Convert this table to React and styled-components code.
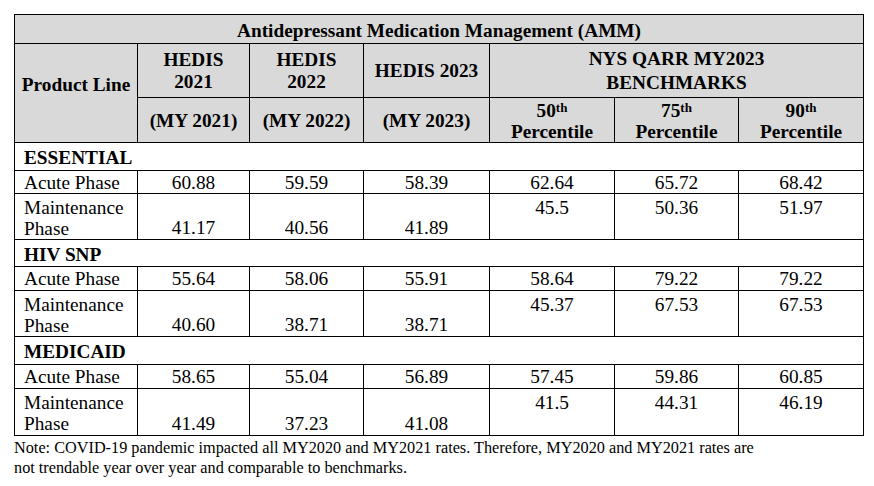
import React from "react";
import styled, { createGlobalStyle } from "styled-components";

const SERIF = `"Liberation Serif", "Times New Roman", Times, serif`;

const Global = createGlobalStyle`
  html, body { margin: 0; padding: 0; background: #ffffff; }
  body { font-family: ${SERIF}; color: #000; }
`;

const Page = styled.div`
  padding: 14px 0 0 14px;
`;

const Table = styled.table`
  border-collapse: collapse;
  table-layout: fixed;
  width: 850px;
  font-family: ${SERIF};
  font-size: 19.3px;
  line-height: 21px;
`;

const Row = styled.tr`
  height: ${(p) => p.$h}px;
`;

const HeadCell = styled.th`
  border: 1px solid #000;
  background: #d9d9d9;
  font-weight: bold;
  text-align: center;
  vertical-align: middle;
  padding: ${(p) => p.$pad || "0 6px"};
  line-height: ${(p) => p.$lh || 21}px;
  white-space: nowrap;
`;

const SectionCell = styled.td`
  border: 1px solid #000;
  font-weight: bold;
  text-align: left;
  vertical-align: middle;
  padding: 2px 9px 0;
`;

const LabelCell = styled.td`
  border: 1px solid #000;
  text-align: left;
  vertical-align: ${(p) => (p.$multi ? "top" : "middle")};
  padding: ${(p) => (p.$multi ? "3px 9px 0" : "0 9px")};
`;

const ValueCell = styled.td`
  border: 1px solid #000;
  text-align: center;
  vertical-align: ${(p) => p.$v || "middle"};
  padding: ${(p) =>
    p.$v === "top" ? "3px 6px 0" : p.$v === "bottom" ? "0 6px 1px" : "0 6px"};
`;

const Sup = styled.sup`
  font-size: 13px;
  line-height: 0;
  vertical-align: 5px;
`;

const Note = styled.p`
  margin: 2px 0 0;
  font-family: ${SERIF};
  font-size: 16.25px;
  line-height: 20px;
`;

const widths = [123, 112, 114, 126, 125, 124, 125];

const sections = [
  {
    name: "ESSENTIAL",
    heights: [28, 23, 46],
    acute: ["60.88", "59.59", "58.39", "62.64", "65.72", "68.42"],
    maint: ["41.17", "40.56", "41.89", "45.5", "50.36", "51.97"],
  },
  {
    name: "HIV SNP",
    heights: [27, 24, 45],
    acute: ["55.64", "58.06", "55.91", "58.64", "79.22", "79.22"],
    maint: ["40.60", "38.71", "38.71", "45.37", "67.53", "67.53"],
  },
  {
    name: "MEDICAID",
    heights: [28, 24, 47],
    acute: ["58.65", "55.04", "56.89", "57.45", "59.86", "60.85"],
    maint: ["41.49", "37.23", "41.08", "41.5", "44.31", "46.19"],
  },
];

export default function App() {
  return (
    <>
      <Global />
      <Page>
        <Table>
          <colgroup>
            {widths.map((w, i) => (
              <col key={i} style={{ width: w }} />
            ))}
          </colgroup>
          <thead>
            <Row $h={29}>
              <HeadCell colSpan={7} $pad="3px 6px 0">
                Antidepressant Medication Management (AMM)
              </HeadCell>
            </Row>
            <Row $h={54}>
              <HeadCell rowSpan={2} $pad="0 6px 18px">
                Product Line
              </HeadCell>
              <HeadCell $lh={21.5}>
                HEDIS
                <br />
                2021
              </HeadCell>
              <HeadCell $lh={21.5}>
                HEDIS
                <br />
                2022
              </HeadCell>
              <HeadCell>HEDIS 2023</HeadCell>
              <HeadCell colSpan={3} $lh={24}>
                NYS QARR MY2023
                <br />
                BENCHMARKS
              </HeadCell>
            </Row>
            <Row $h={45}>
              <HeadCell>(MY 2021)</HeadCell>
              <HeadCell>(MY 2022)</HeadCell>
              <HeadCell>(MY 2023)</HeadCell>
              {["50", "75", "90"].map((n) => (
                <HeadCell key={n} $lh={21} $pad="2px 6px 0">
                  {n}
                  <Sup>th</Sup>
                  <br />
                  Percentile
                </HeadCell>
              ))}
            </Row>
          </thead>
          <tbody>
            {sections.map((s) => (
              <React.Fragment key={s.name}>
                <Row $h={s.heights[0]}>
                  <SectionCell colSpan={7}>{s.name}</SectionCell>
                </Row>
                <Row $h={s.heights[1]}>
                  <LabelCell>Acute Phase</LabelCell>
                  {s.acute.map((v, i) => (
                    <ValueCell key={i}>{v}</ValueCell>
                  ))}
                </Row>
                <Row $h={s.heights[2]}>
                  <LabelCell $multi>
                    Maintenance
                    <br />
                    Phase
                  </LabelCell>
                  {s.maint.map((v, i) => (
                    <ValueCell key={i} $v={i < 3 ? "bottom" : "top"}>
                      {v}
                    </ValueCell>
                  ))}
                </Row>
              </React.Fragment>
            ))}
          </tbody>
        </Table>
        <Note>
          Note: COVID-19 pandemic impacted all MY2020 and MY2021 rates. Therefore, MY2020 and MY2021 rates are
          <br />
          not trendable year over year and comparable to benchmarks.
        </Note>
      </Page>
    </>
  );
}
